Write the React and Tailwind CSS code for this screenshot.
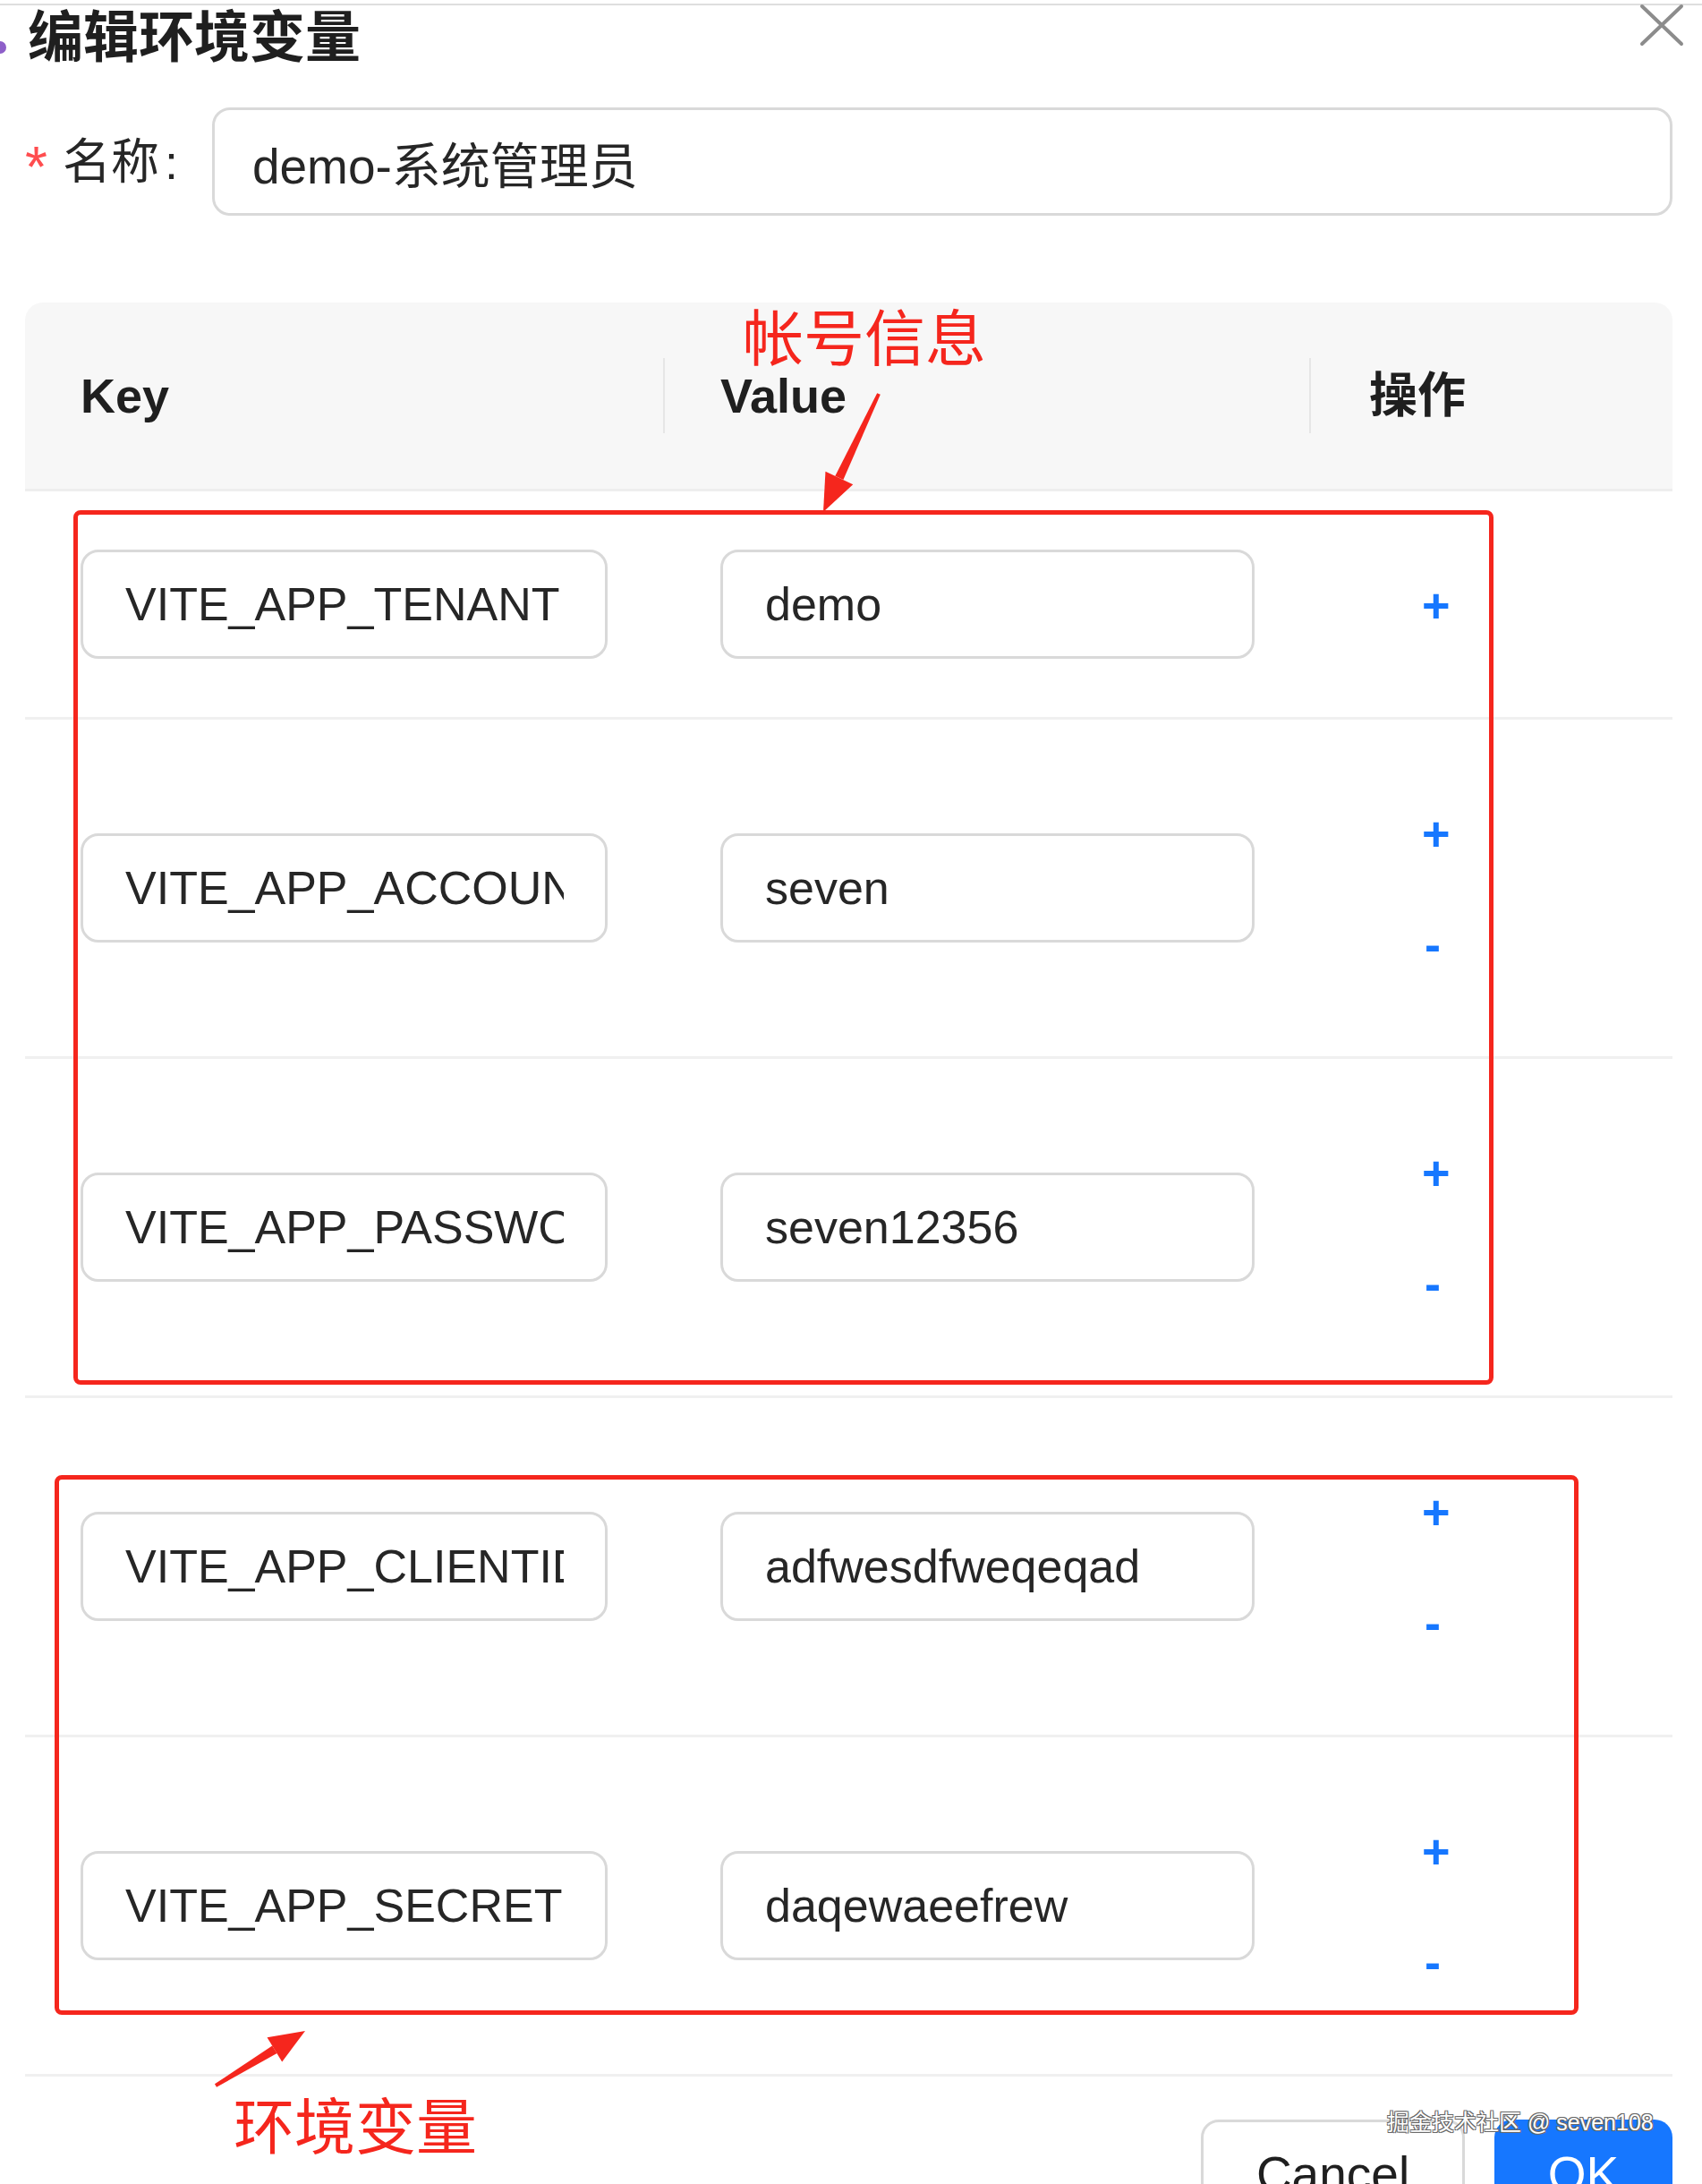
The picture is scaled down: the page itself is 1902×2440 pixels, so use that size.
import React from "react";

const rows = [
  { k: "VITE_APP_TENANT", v: "demo", minus: false },
  { k: "VITE_APP_ACCOUNT", v: "seven", minus: true },
  { k: "VITE_APP_PASSWORD", v: "seven12356", minus: true },
  { k: "VITE_APP_CLIENTID", v: "adfwesdfweqeqad", minus: true },
  { k: "VITE_APP_SECRET", v: "daqewaeefrew", minus: true },
];

// tapered annotation arrow: shaft + triangle head
function arrowPoints(x1, y1, x2, y2, len, half, w1, w2) {
  const dx = x2 - x1;
  const dy = y2 - y1;
  const d = Math.hypot(dx, dy);
  const ux = dx / d;
  const uy = dy / d;
  const px = -uy;
  const py = ux;
  const bx = x2 - ux * len;
  const by = y2 - uy * len;
  const shaft = [
    [x1 + (px * w1) / 2, y1 + (py * w1) / 2],
    [bx + (px * w2) / 2, by + (py * w2) / 2],
    [bx - (px * w2) / 2, by - (py * w2) / 2],
    [x1 - (px * w1) / 2, y1 - (py * w1) / 2],
  ];
  const head = [
    [x2, y2],
    [bx + px * half, by + py * half],
    [bx - px * half, by - py * half],
  ];
  const s = (pts) => pts.map((p) => p.join(",")).join(" ");
  return { shaft: s(shaft), head: s(head) };
}

const a1 = arrowPoints(982, 440, 920, 572, 42, 17, 4, 10);
const a2 = arrowPoints(241, 2330, 341, 2269, 40, 16, 4, 10);

function Field({ value, className }) {
  return (
    <input
      readOnly
      value={value}
      className={
        "h-[122px] rounded-[20px] border-[3px] border-[#d9d9d9] bg-white pl-[47px] pr-[46px] text-[52px] text-[#262626] outline-none " +
        className
      }
    />
  );
}

export default function App() {
  return (
    <div className="relative w-[1902px] h-[2440px] overflow-hidden bg-white text-[#262626] [font-family:'Liberation_Sans','Noto_Sans_CJK_SC',sans-serif]">
      <div className="mt-[4px] h-[2px] bg-[#dedede]" />

      {/* purple dot at the left edge */}
      <span className="absolute left-[-7px] top-[46px] w-[14px] h-[14px] rounded-full bg-[#8e5fc9]" />

      {/* close icon */}
      <svg
        className="absolute left-[1830px] top-[3px]"
        width="54"
        height="50"
        viewBox="0 0 54 50"
      >
        <path
          d="M5 4 L49 46 M49 4 L5 46"
          stroke="#8c8c8c"
          strokeWidth="4"
          strokeLinecap="round"
          fill="none"
        />
      </svg>

      <div className="pl-[28px] pr-[33px]">
        <h1 className="mt-[6px] pl-[3px] text-[62px] leading-[62px] font-bold text-[#1f1f1f]">
          编辑环境变量
        </h1>

        <div className="mt-[46px] flex h-[121px] items-center">
          <span className="self-start mt-[35px] text-[64px] leading-none text-[#ff4d4f]">*</span>
          <span className="ml-[17px] text-[54px] leading-none">名称</span>
          <span className="ml-[6px] text-[54px] leading-none">:</span>
          <input
            readOnly
            value="demo-系统管理员"
            className="ml-[38px] h-[121px] flex-1 rounded-[20px] border-[3px] border-[#d9d9d9] bg-white pl-[42px] text-[55px] text-[#262626] outline-none"
          />
        </div>

        {/* table */}
        <div className="mt-[97px]">
          <div className="grid h-[211px] grid-cols-[713px_722px_1fr] items-center rounded-t-[20px] border-b-[3px] border-[#eeeeee] bg-[#f7f7f7] text-[54px] font-bold text-[#1f1f1f]">
            <div className="pl-[62px]">Key</div>
            <div className="flex items-center">
              <div className="h-[84px] w-[2px] bg-[#e6e6e6]" />
              <span className="ml-[62px]">Value</span>
            </div>
            <div className="flex items-center">
              <div className="h-[84px] w-[2px] bg-[#e6e6e6]" />
              <span className="ml-[65px]">操作</span>
            </div>
          </div>

          {rows.map((r) => (
            <div
              key={r.k}
              className="grid grid-cols-[713px_722px_1fr] items-center border-b-[3px] border-[#f0f0f0]"
            >
              <div className="pl-[62px]">
                <Field value={r.k} className="w-[589px]" />
              </div>
              <div className="pl-[64px]">
                <Field value={r.v} className="w-[597px]" />
              </div>
              <div className="flex flex-col py-[95px] pl-[126px] text-[54px] font-bold text-[#1677ff]">
                <span className="h-[62px] leading-[64px]">+</span>
                {r.minus && <span className="mt-[62px] h-[62px] leading-[64px] pl-[3px]">-</span>}
              </div>
            </div>
          ))}
        </div>

        <div className="mt-[48px] flex justify-end gap-[33px]">
          <button className="h-[122px] w-[295px] rounded-[20px] border-[3px] border-[#d9d9d9] bg-white text-[55px] text-[#1f1f1f]">
            Cancel
          </button>
          <button className="h-[122px] w-[199px] rounded-[20px] bg-[#1677ff] text-[55px] text-white">
            OK
          </button>
        </div>
      </div>

      {/* red annotations */}
      <div className="absolute left-[82px] top-[570px] h-[977px] w-[1587px] rounded-[8px] border-[5px] border-[#f5261d]" />
      <div className="absolute left-[61px] top-[1648px] h-[603px] w-[1703px] rounded-[8px] border-[5px] border-[#f5261d]" />
      <div className="absolute left-[830px] top-[340px] text-[68px] leading-none text-[#f5261d] [font-family:'Noto_Sans_CJK_SC',sans-serif]">
        帐号信息
      </div>
      <div className="absolute left-[261px] top-[2338px] text-[68px] leading-none text-[#f5261d] [font-family:'Noto_Sans_CJK_SC',sans-serif]">
        环境变量
      </div>
      <svg className="pointer-events-none absolute left-0 top-0" width="1902" height="2440">
        <polygon points={a1.shaft} fill="#f5261d" />
        <polygon points={a1.head} fill="#f5261d" />
        <polygon points={a2.shaft} fill="#f5261d" />
        <polygon points={a2.head} fill="#f5261d" />
      </svg>

      {/* watermark */}
      <div className="absolute left-[1550px] top-[2354px] text-[25px] leading-[34px] text-white [text-shadow:1px_1px_0_#666,-1px_-1px_0_#666,1px_-1px_0_#666,-1px_1px_0_#666]">
        掘金技术社区 @ seven108
      </div>
    </div>
  );
}
